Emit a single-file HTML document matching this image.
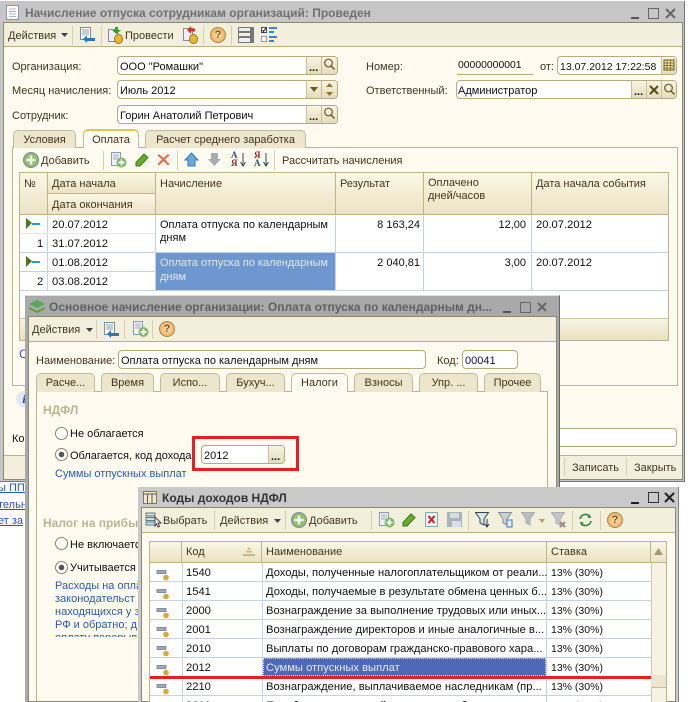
<!DOCTYPE html>
<html><head><meta charset="utf-8">
<style>
html,body{margin:0;padding:0;background:#fff}
#p{position:relative;width:688px;height:702px;overflow:hidden;background:#fff;font:11px "Liberation Sans",sans-serif;color:#3a3018}
#p div,#p span,#p svg{position:absolute;box-sizing:border-box}
.t{white-space:nowrap;line-height:14px;color:#40361c;margin-top:1px}
.k{color:#111;white-space:nowrap;line-height:14px;margin-top:1px}
.r{font-size:11.2px}
.n{font-size:10.5px}
.b{color:#2456c8;white-space:nowrap;line-height:13px;margin-top:1px}
.f{background:#fff;border:1px solid #b5aa80;border-radius:4px}
.btn{background:linear-gradient(#f8f4e2,#e4dcbc);border-left:1px solid #c8bf98}
.tab{background:#ece6cc;border:1px solid #c4bb96;border-bottom:none;border-radius:5px 5px 0 0;text-align:center;line-height:19px;color:#40361c;white-space:nowrap}
.act{background:#fffbf0;border-top:2px solid #e8c060}
.th{background:linear-gradient(#fbf7e4,#ebe3c4);border-right:1px solid #bdb48c;border-bottom:1px solid #bdb48c;padding:4px 0 0 4px;color:#40361c;line-height:14px;white-space:pre-line}
.w3 .th{padding-top:3px}
.sep{width:1px;background:#d6cfae}
.ln{background:#c4d2e4}
.tb{background:#f3efdd;border-bottom:1px solid #b8ae88}
</style></head><body><div id="p">

<!-- WINDOW 1 -->
<div style="left:0;top:1px;width:685px;height:481px;background:#c6c6c6;border-right:1px solid #777;border-bottom:1px solid #777"></div>
<div style="left:3px;top:22px;width:680px;height:458px;background:#fffbf0;border:1px solid #8a8a70"></div>
<svg style="left:6px;top:5px" width="13" height="15"><path d="M.5.5h12v14H.5z" fill="#fff" stroke="#7f9ab4"/><path d="M3 4h7M3 6.500h7M3 9h7M3 11.500h7" stroke="#a8b4bc"/></svg>
<span style="left:25px;top:6px;font-weight:bold;font-size:12px;line-height:14px;color:#707070;white-space:nowrap">Начисление отпуска сотрудникам организаций: Проведен</span>
<svg style="left:630px;top:6px" width="50" height="14"><path d="M1 12h8" stroke="#555" stroke-width="2"/><rect x="18.500" y="2.500" width="10" height="10" fill="none" stroke="#666"/><path d="M36 3l9 9M45 3l-9 9" stroke="#666" stroke-width="2"/></svg>
<div class="tb" style="left:4px;top:23px;width:678px;height:24px"></div>
<span class="t" style="left:8px;top:28px">Действия</span>
<svg style="left:61px;top:33px" width="7" height="4"><path d="M0 0h7L3.500 4z" fill="#444"/></svg>
<div class="sep" style="left:72px;top:26px;height:19px"></div>
<svg style="left:79px;top:27px" width="17" height="16"><path d="M1.500.5h10v12h-10z" fill="#fff" stroke="#7a8ca4"/><path d="M3 3h7M3 5h7M3 7h7" stroke="#89a"/><path d="M16 11H8V8l-4 4 4 4v-2h8z" fill="#2a78b8"/></svg>
<div class="sep" style="left:101px;top:26px;height:19px"></div>
<svg style="left:107px;top:27px" width="16" height="17"><path d="M1.500 2.500h9v12h-9z" fill="#eef" stroke="#889"/><path d="M8 0h3v3h3l-4.500 4L5 3h3z" fill="#3a9a3a"/><ellipse cx="11.500" cy="12" rx="4" ry="4.500" fill="#e8b830" stroke="#a07818"/></svg>
<span class="t" style="left:125px;top:28px">Провести</span>
<svg style="left:182px;top:26px" width="16" height="18"><path d="M1.500 2.500h9v12h-9z" fill="#eef" stroke="#889"/><path d="M5 4l4-4v2.500h4v3H9V8z" fill="#d83020"/><ellipse cx="11.500" cy="13" rx="4" ry="4.500" fill="#e8b830" stroke="#a07818"/></svg>
<div class="sep" style="left:203px;top:26px;height:19px"></div>
<div style="left:210px;top:27px;width:16px;height:16px;border-radius:50%;background:radial-gradient(#ffe4b4,#e8a048);border:1px solid #a8884c;text-align:center;font:bold 11px/14px 'Liberation Sans',sans-serif;color:#7a5a20">?</div>
<div class="sep" style="left:231px;top:26px;height:19px"></div>
<svg style="left:238px;top:27px" width="16" height="16"><path d="M0 0h16v16H0z" fill="#777"/><path d="M1 1h11v3H1zM1 6h11v3H1zM1 11h11v4H1z" fill="#eee"/></svg>
<svg style="left:261px;top:27px" width="18" height="16"><rect x=".5" y=".5" width="5" height="5" fill="#fff" stroke="#444"/><path d="M1.500 3l1 1.500L5 1" stroke="#111" fill="none"/><rect x=".5" y="9.500" width="5" height="5" fill="#fff" stroke="#999"/><path d="M8 1h8M8 5h5M8 10h8M8 14h5" stroke="#2a6ed0" stroke-width="1.800"/></svg>

<span class="t" style="left:12px;top:59px">Организация:</span>
<span class="t" style="left:12px;top:83px">Месяц начисления:</span>
<span class="t" style="left:12px;top:108px">Сотрудник:</span>
<div class="f" style="left:117px;top:56px;width:221px;height:19px"></div>
<span class="k" style="left:120px;top:59px">ООО "Ромашки"</span>
<div class="f" style="left:117px;top:80px;width:221px;height:19px"></div>
<span class="k" style="left:120px;top:83px">Июль 2012</span>
<div class="f" style="left:117px;top:105px;width:221px;height:19px"></div>
<span class="k" style="left:120px;top:108px">Горин Анатолий Петрович</span>
<!-- field buttons -->
<div class="btn" style="left:306px;top:57px;width:15px;height:17px"></div><div class="btn" style="left:321px;top:57px;width:16px;height:17px;border-radius:0 3px 3px 0"></div>
<span class="k" style="left:309px;top:60px;font-weight:bold">...</span>
<svg style="left:323px;top:58px" width="13" height="13"><circle cx="5.500" cy="5" r="3.800" fill="none" stroke="#6a5a28" stroke-width="1.200"/><path d="M8 8l3.500 3.500" stroke="#6a5a28" stroke-width="1.500"/></svg>
<div class="btn" style="left:306px;top:81px;width:15px;height:17px"></div><div class="btn" style="left:321px;top:81px;width:16px;height:17px;border-radius:0 3px 3px 0"></div>
<svg style="left:310px;top:87px" width="8" height="5"><path d="M0 0h8L4 5z" fill="#6a5a18"/></svg>
<svg style="left:326px;top:83px" width="7" height="13"><path d="M0 4l3.500-4L7 4zM0 9h7l-3.500 4z" fill="#8a7a30"/></svg>
<div class="btn" style="left:306px;top:106px;width:15px;height:17px"></div><div class="btn" style="left:321px;top:106px;width:16px;height:17px;border-radius:0 3px 3px 0"></div>
<span class="k" style="left:309px;top:109px;font-weight:bold">...</span>
<svg style="left:323px;top:107px" width="13" height="13"><circle cx="5.500" cy="5" r="3.800" fill="none" stroke="#6a5a28" stroke-width="1.200"/><path d="M8 8l3.500 3.500" stroke="#6a5a28" stroke-width="1.500"/></svg>

<span class="t" style="left:366px;top:59px">Номер:</span>
<span class="t" style="left:366px;top:83px">Ответственный:</span>
<span class="k" style="left:458px;top:58px;font-size:10.4px">00000000001</span>
<div style="left:457px;top:74px;width:76px;height:1px;background:#b5aa80"></div>
<span class="t" style="left:540px;top:59px">от:</span>
<div class="f" style="left:557px;top:56px;width:120px;height:19px"></div>
<span class="k" style="left:560px;top:59px;font-size:10.5px">13.07.2012 17:22:58</span>
<div class="btn" style="left:661px;top:57px;width:15px;height:17px;border-radius:0 3px 3px 0"></div>
<svg style="left:663px;top:59px" width="12" height="12"><path d="M1 1h10v10H1z" fill="#f4e8b0" stroke="#6a5a18"/><path d="M1 4h10M1 6.500h10M1 9h10M4 1v10M7.500 1v10" stroke="#6a5a18" stroke-width=".7"/></svg>
<div class="f" style="left:456px;top:80px;width:221px;height:19px"></div>
<span class="k" style="left:458px;top:83px">Администратор</span>
<div class="btn" style="left:631px;top:81px;width:15px;height:17px"></div><div class="btn" style="left:646px;top:81px;width:15px;height:17px"></div><div class="btn" style="left:661px;top:81px;width:15px;height:17px;border-radius:0 3px 3px 0"></div>
<span class="k" style="left:634px;top:84px;font-weight:bold">...</span>
<svg style="left:649px;top:85px" width="10" height="10"><path d="M1 1l8 8M9 1l-8 8" stroke="#5a4a18" stroke-width="2"/></svg>
<svg style="left:663px;top:83px" width="13" height="13"><circle cx="5.500" cy="5" r="3.800" fill="none" stroke="#6a5a28" stroke-width="1.200"/><path d="M8 8l3.500 3.500" stroke="#6a5a28" stroke-width="1.500"/></svg>

<!-- tabs -->
<div style="left:12px;top:147px;width:666px;height:239px;border:1px solid #bdb48c"></div>
<div class="tab" style="left:13px;top:130px;width:63px;height:18px">Условия</div>
<div class="tab" style="left:145px;top:130px;width:161px;height:18px">Расчет среднего заработка</div>
<div class="tab act" style="left:83px;top:129px;width:56px;height:19px;z-index:2;line-height:18px">Оплата</div>

<!-- inner toolbar -->
<svg style="left:23px;top:152px" width="16" height="16"><circle cx="8" cy="8" r="7.500" fill="#8ec06c" stroke="#789"/><path d="M8 3.500v9M3.500 8h9" stroke="#fff" stroke-width="2.500"/></svg>
<span class="t" style="left:41px;top:153px"><u>Д</u>обавить</span>
<div class="sep" style="left:103px;top:151px;height:19px"></div>
<svg style="left:110px;top:152px" width="17" height="16"><path d="M1.500.5h9v13h-9z" fill="#f0f4fa" stroke="#8a9ab0"/><path d="M3 3h6M3 5h6M3 7h6" stroke="#aab"/><circle cx="11.500" cy="10.500" r="5" fill="#80b868"/><path d="M11.500 7.500v6M8.500 10.500h6" stroke="#fff" stroke-width="1.800"/></svg>
<svg style="left:135px;top:153px" width="14" height="14"><path d="M1 13V9.500L9 1l4 3.500L5 13z" fill="#68ac30" stroke="#3a7a18"/></svg>
<svg style="left:157px;top:153px" width="13" height="13"><path d="M2 1l4.500 4L11 1l1.500 1.500L8 6.500l4.500 4.500-1.500 1.500L6.500 8 2 12.500.5 11 5 6.500.5 2.500z" fill="#e86a50"/></svg>
<div class="sep" style="left:177px;top:151px;height:19px"></div>
<svg style="left:184px;top:152px" width="15" height="15"><path d="M7.500 1L14 8h-3v6H4V8H1z" fill="#6aa8e0" stroke="#3a78b0"/></svg>
<svg style="left:207px;top:152px" width="15" height="15"><path d="M4 1h7v6h3l-6.500 7L1 7h3z" fill="#a8acae"/></svg>
<span style="left:231px;top:151px;font:bold 9px/8px 'Liberation Serif',serif;color:#2a50a0">А</span><span style="left:231px;top:159px;font:bold 9px/8px 'Liberation Serif',serif;color:#b02020">Я</span>
<svg style="left:240px;top:153px" width="6" height="14"><path d="M3 0v12M.5 9L3 13l2.500-4" stroke="#345" fill="none"/></svg>
<span style="left:254px;top:151px;font:bold 9px/8px 'Liberation Serif',serif;color:#b02020">Я</span><span style="left:254px;top:159px;font:bold 9px/8px 'Liberation Serif',serif;color:#2a50a0">А</span>
<svg style="left:263px;top:153px" width="6" height="14"><path d="M3 0v12M.5 9L3 13l2.500-4" stroke="#345" fill="none"/></svg>
<div class="sep" style="left:274px;top:151px;height:19px"></div>
<span class="t" style="left:282px;top:153px">Рассчитать начисления</span>

<!-- table 1 -->
<div style="left:19px;top:172px;width:650px;height:169px;background:#fff;border:1px solid #bdb48c"></div>
<div class="th" style="left:20px;top:173px;width:28px;height:42px">№</div>
<div class="th" style="left:48px;top:173px;width:108px;height:21px">Дата начала</div>
<div class="th" style="left:48px;top:194px;width:108px;height:21px">Дата окончания</div>
<div class="th" style="left:156px;top:173px;width:180px;height:42px">Начисление</div>
<div class="th" style="left:336px;top:173px;width:88px;height:42px">Результат</div>
<div class="th" style="left:424px;top:173px;width:108px;height:42px;line-height:13px">Оплачено
дней/часов</div>
<div class="th" style="left:532px;top:173px;width:136px;height:42px;border-right:none">Дата начала события</div>
<div class="ln" style="left:20px;top:252px;width:648px;height:1px"></div>
<div class="ln" style="left:20px;top:290px;width:648px;height:1px"></div>
<div class="ln" style="left:47px;top:215px;width:1px;height:75px"></div>
<div class="ln" style="left:155px;top:215px;width:1px;height:75px"></div>
<div class="ln" style="left:335px;top:215px;width:1px;height:75px"></div>
<div class="ln" style="left:423px;top:215px;width:1px;height:75px"></div>
<div class="ln" style="left:531px;top:215px;width:1px;height:75px"></div>
<div class="ln" style="left:20px;top:233px;width:135px;height:1px;background:#e4e8ee"></div>
<div class="ln" style="left:20px;top:271px;width:135px;height:1px"></div>
<svg style="left:26px;top:218px" width="15" height="12"><path d="M0 0l6 5-6 6z" fill="#4a7a18"/><path d="M6 6h8" stroke="#2a9ac8" stroke-width="2"/></svg>
<svg style="left:26px;top:256px" width="15" height="12"><path d="M0 0l6 5-6 6z" fill="#4a7a18"/><path d="M6 6h8" stroke="#2a9ac8" stroke-width="2"/></svg>
<span class="k r" style="left:52px;top:217px">20.07.2012</span>
<span class="k r" style="left:37px;top:236px">1</span><span class="k r" style="left:52px;top:236px">31.07.2012</span>
<span class="k r" style="left:52px;top:255px">01.08.2012</span>
<span class="k r" style="left:37px;top:274px">2</span><span class="k r" style="left:52px;top:274px">03.08.2012</span>
<span class="k" style="left:160px;top:217px">Оплата отпуска по календарным</span><span class="k" style="left:160px;top:230px">дням</span>
<div style="left:156px;top:253px;width:179px;height:37px;background:#6f97cf"></div>
<span class="k" style="left:160px;top:255px;color:#dfe8f4">Оплата отпуска по календарным</span><span class="k" style="left:160px;top:269px;color:#dfe8f4">дням</span>
<span class="k" style="right:268px;top:217px">8 163,24</span>
<span class="k" style="right:268px;top:255px">2 040,81</span>
<span class="k" style="right:162px;top:217px">12,00</span>
<span class="k" style="right:162px;top:255px">3,00</span>
<span class="k r" style="left:536px;top:217px">20.07.2012</span>
<span class="k r" style="left:536px;top:255px">20.07.2012</span>
<div style="left:20px;top:318px;width:648px;height:22px;background:linear-gradient(#f8f5e4,#e8e0c0);border-top:1px solid #d0c8a4"></div>

<span class="b" style="left:19px;top:347px;font-size:12px">С</span>
<div style="left:16px;top:391px;width:16px;height:16px;border-radius:50%;background:#e4e8f4;color:#1a3ac0;font:bold italic 12px/16px 'Liberation Serif',serif;text-align:center">i</div>
<span class="k" style="left:12px;top:431px">Ко</span>
<div class="f" style="left:500px;top:428px;width:177px;height:19px"></div>
<div style="left:4px;top:455px;width:678px;height:24px;background:#f3efdd;border-top:1px solid #bdb48c"></div>
<div class="sep" style="left:564px;top:458px;height:18px"></div>
<span class="t" style="left:572px;top:460px">Записать</span>
<div class="sep" style="left:626px;top:458px;height:18px"></div>
<span class="t" style="left:634px;top:460px">Закрыть</span>

<!-- behind links -->
<span class="b" style="left:-2px;top:481px;text-decoration:underline">ы ПП</span>
<span class="b" style="left:-2px;top:498px;text-decoration:underline">тельн</span>
<span class="b" style="left:-2px;top:514px;text-decoration:underline">ет за</span>

<!-- WINDOW 2 -->
<div style="left:25px;top:295px;width:535px;height:407px;background:#a9a9a9;border-right:1px solid #666;border-top:1px solid #e0e0e0"></div>
<div style="left:28px;top:316px;width:529px;height:386px;background:#fffbf0;border:1px solid #8a8a70"></div>
<svg style="left:29px;top:300px" width="16" height="13"><path d="M8 0l8 4-8 4-8-4z" fill="#58a858"/><path d="M0 7l8 4 8-4v2l-8 4-8-4z" fill="#58a030"/></svg>
<span style="left:49px;top:300px;font-weight:bold;font-size:12px;line-height:14px;color:#606060;white-space:nowrap">Основное начисление организации: Оплата отпуска по календарным дн...</span>
<svg style="left:502px;top:300px" width="50" height="14"><path d="M1 12h8" stroke="#555" stroke-width="2"/><rect x="18.500" y="2.500" width="10" height="10" fill="none" stroke="#666"/><path d="M36 3l8 8M44 3l-8 8" stroke="#666" stroke-width="2"/></svg>
<div class="tb" style="left:29px;top:317px;width:527px;height:25px"></div>
<span class="t" style="left:32px;top:322px">Действия</span>
<svg style="left:86px;top:328px" width="7" height="4"><path d="M0 0h7L3.500 4z" fill="#444"/></svg>
<div class="sep" style="left:96px;top:320px;height:19px"></div>
<svg style="left:103px;top:322px" width="17" height="16"><path d="M1.500.5h10v12h-10z" fill="#fff" stroke="#7a8ca4"/><path d="M3 3h7M3 5h7M3 7h7" stroke="#89a"/><path d="M16 11H8V8l-4 4 4 4v-2h8z" fill="#2a78b8"/></svg>
<div class="sep" style="left:124px;top:320px;height:19px"></div>
<svg style="left:132px;top:321px" width="17" height="17"><path d="M1.500.5h9v13h-9z" fill="#f0f4fa" stroke="#8a9ab0"/><path d="M3 3h6M3 5h6M3 7h6" stroke="#aab"/><circle cx="11.500" cy="11" r="5" fill="#80b868"/><path d="M11.500 8v6M8.500 11h6" stroke="#fff" stroke-width="1.800"/></svg>
<div class="sep" style="left:152px;top:320px;height:19px"></div>
<div style="left:159px;top:321px;width:16px;height:16px;border-radius:50%;background:radial-gradient(#ffe4b4,#e8a048);border:1px solid #a8884c;text-align:center;font:bold 11px/14px 'Liberation Sans',sans-serif;color:#7a5a20">?</div>

<span class="t" style="left:36px;top:353px">Наименование:</span>
<div class="f" style="left:118px;top:350px;width:308px;height:19px"></div>
<span class="k" style="left:121px;top:353px">Оплата отпуска по календарным дням</span>
<span class="t" style="left:437px;top:353px">Код:</span>
<div class="f" style="left:462px;top:350px;width:56px;height:19px"></div>
<span class="k" style="left:465px;top:353px;color:#101060">00041</span>

<div style="left:36px;top:391px;width:512px;height:320px;border:1px solid #bdb48c"></div>
<div class="tab" style="left:36px;top:373px;width:59px;height:19px">Расче...</div>
<div class="tab" style="left:101px;top:373px;width:53px;height:19px">Время</div>
<div class="tab" style="left:160px;top:373px;width:60px;height:19px">Испо...</div>
<div class="tab" style="left:226px;top:373px;width:59px;height:19px">Бухуч...</div>
<div class="tab act" style="left:291px;top:373px;width:57px;height:19px;z-index:2;border-top:1px solid #c4bb96">Налоги</div>
<div class="tab" style="left:354px;top:373px;width:59px;height:19px">Взносы</div>
<div class="tab" style="left:419px;top:373px;width:59px;height:19px">Упр. ...</div>
<div class="tab" style="left:484px;top:373px;width:57px;height:19px">Прочее</div>

<span style="left:43px;top:403px;font-weight:bold;font-size:12px;line-height:14px;color:#bdb494">НДФЛ</span>
<div style="left:55px;top:427px;width:13px;height:13px;border:1px solid #8a8468;border-radius:50%;background:#fff"></div>
<span class="k" style="left:70px;top:426px">Не облагается</span>
<div style="left:55px;top:448px;width:13px;height:13px;border:1px solid #8a8468;border-radius:50%;background:radial-gradient(#555 0 2.500px,#fff 3px)"></div>
<span class="k" style="left:70px;top:448px">Облагается, код дохода</span>
<span class="b" style="left:55px;top:467px;color:#2a5ab0">Суммы отпускных выплат</span>
<div style="left:192px;top:436px;width:107px;height:35px;border:3.500px solid #ea1c24"></div>
<div class="f" style="left:201px;top:445px;width:84px;height:19px"></div>
<span class="k" style="left:204px;top:448px">2012</span>
<div class="btn" style="left:268px;top:446px;width:16px;height:17px;border-radius:0 3px 3px 0"></div>
<span class="k" style="left:271px;top:449px;font-weight:bold">...</span>

<span style="left:43px;top:516px;font-weight:bold;font-size:12px;line-height:14px;color:#bdb494;white-space:nowrap">Налог на прибы</span>
<div style="left:55px;top:537px;width:13px;height:13px;border:1px solid #8a8468;border-radius:50%;background:#fff"></div>
<span class="k" style="left:70px;top:537px">Не включается</span>
<div style="left:55px;top:561px;width:13px;height:13px;border:1px solid #8a8468;border-radius:50%;background:radial-gradient(#555 0 2.500px,#fff 3px)"></div>
<span class="k" style="left:70px;top:560px">Учитывается</span>
<span class="b" style="left:55px;top:579px;color:#2a5ab0">Расходы на опла</span>
<span class="b" style="left:55px;top:592px;color:#2a5ab0">законодательст</span>
<span class="b" style="left:55px;top:605px;color:#2a5ab0">находящихся у з</span>
<span class="b" style="left:55px;top:618px;color:#2a5ab0">РФ и обратно; д</span>
<div style="left:55px;top:631px;width:85px;height:6px;overflow:hidden"><span class="b" style="left:0;top:0;color:#2a5ab0">оплату перерыв</span></div>

<!-- WINDOW 3 -->
<div class="w3" style="left:0;top:0;width:688px;height:702px">
<div style="left:138px;top:487px;width:541px;height:215px;background:#c9c9c9;border-right:1px solid #888"></div>
<div style="left:141px;top:507px;width:535px;height:195px;background:#fffbf0;border:1px solid #8a8a70"></div>
<svg style="left:143px;top:491px" width="14" height="13"><path d="M.5.500h13v12H.5z" fill="#f4e8c0" stroke="#777"/><path d="M.5 3h13M4.500 3v9M9 3v9" stroke="#556"/></svg>
<span style="left:162px;top:491px;font-weight:bold;font-size:12px;line-height:14px;color:#333;white-space:nowrap">Коды доходов НДФЛ</span>
<svg style="left:630px;top:490px" width="46" height="15"><path d="M1 13h8" stroke="#222" stroke-width="2"/><rect x="18.500" y="2.500" width="10" height="10" fill="none" stroke="#333"/><path d="M35 3l9 9M44 3l-9 9" stroke="#222" stroke-width="2"/></svg>
<div class="tb" style="left:142px;top:508px;width:533px;height:25px"></div>
<svg style="left:145px;top:512px" width="18" height="16"><path d="M1 1h9v3H1zM1 5.500h9v3H1zM1 10h9v3H1z" fill="#cfe0e8" stroke="#5a7a88"/><path d="M10 5l6 6h-3l1.500 3.500-1.500.5L11.500 12 10 14z" fill="#fff" stroke="#445"/></svg>
<span class="t" style="left:163px;top:513px">Выбрать</span>
<div class="sep" style="left:214px;top:511px;height:19px"></div>
<span class="t" style="left:220px;top:513px">Действия</span>
<svg style="left:274px;top:519px" width="7" height="4"><path d="M0 0h7L3.500 4z" fill="#444"/></svg>
<div class="sep" style="left:285px;top:511px;height:19px"></div>
<svg style="left:291px;top:512px" width="16" height="16"><circle cx="8" cy="8" r="7.500" fill="#8ec06c" stroke="#789"/><path d="M8 3.500v9M3.500 8h9" stroke="#fff" stroke-width="2.500"/></svg>
<span class="t" style="left:309px;top:513px"><u>Д</u>обавить</span>
<div class="sep" style="left:371px;top:511px;height:19px"></div>
<svg style="left:378px;top:512px" width="17" height="16"><path d="M1.500.5h9v13h-9z" fill="#f0f4fa" stroke="#8a9ab0"/><path d="M3 3h6M3 5h6M3 7h6" stroke="#aab"/><circle cx="11.500" cy="10.500" r="5" fill="#80b868"/><path d="M11.500 7.500v6M8.500 10.500h6" stroke="#fff" stroke-width="1.800"/></svg>
<svg style="left:402px;top:513px" width="14" height="14"><path d="M1 13V9.500L9 1l4 3.500L5 13z" fill="#68ac30" stroke="#3a7a18"/></svg>
<svg style="left:425px;top:512px" width="13" height="15"><path d="M.5.500h12v14H.5z" fill="#e8f0f8" stroke="#8aa"/><path d="M3.500 4l6 7M9.500 4l-6 7" stroke="#d02020" stroke-width="2"/></svg>
<svg style="left:447px;top:512px" width="15" height="15"><path d="M0 0h15v15H0z" fill="#a8b4bc"/><path d="M3 1h9v5H3z" fill="#d8dcdc"/><path d="M5 9h9v6H5z" fill="#dde"/></svg>
<div class="sep" style="left:468px;top:511px;height:19px"></div>
<svg style="left:475px;top:512px" width="15" height="16"><path d="M.5.500h13L9 7v6l-4-2V7z" fill="#dde4e8" stroke="#345"/><path d="M12 7v7M10 12l2 3 2-3" stroke="#234" fill="none"/></svg>
<svg style="left:498px;top:512px" width="15" height="16"><path d="M.5.500h13L9 7v6l-4-2V7z" fill="#c8d0d0" stroke="#889"/><path d="M9 8h5v7H9z" fill="#e8f0fa" stroke="#3a78c0"/></svg>
<svg style="left:521px;top:512px" width="15" height="16"><path d="M.5.500h13L9 7v6l-4-2V7z" fill="#b8c0b8" stroke="#aab"/></svg>
<svg style="left:539px;top:519px" width="6" height="4"><path d="M0 0h6L3 4z" fill="#b8a050"/></svg>
<svg style="left:551px;top:512px" width="16" height="16"><path d="M.5.500h13L9 7v6l-4-2V7z" fill="#c0c8c8" stroke="#aab"/><path d="M9 10l5 5M14 10l-5 5" stroke="#a08888" stroke-width="2"/></svg>
<div class="sep" style="left:572px;top:511px;height:19px"></div>
<svg style="left:578px;top:513px" width="15" height="14"><path d="M2 6a5.500 5.500 0 0 1 10-2M13 8a5.500 5.500 0 0 1-10 2" stroke="#2a8a3a" stroke-width="1.600" fill="none"/><path d="M11 1l2.500 3.500L9.500 5zM4 13l-2.500-3.500L5.500 9z" fill="#2a8a3a"/></svg>
<div class="sep" style="left:600px;top:511px;height:19px"></div>
<div style="left:607px;top:512px;width:16px;height:16px;border-radius:50%;background:radial-gradient(#ffe4b4,#e8a048);border:1px solid #a8884c;text-align:center;font:bold 11px/14px 'Liberation Sans',sans-serif;color:#7a5a20">?</div>

<div style="left:149px;top:541px;width:518px;height:161px;background:#fff;border:1px solid #bdb48c;border-bottom:none"></div>
<div class="th" style="left:150px;top:542px;width:32px;height:21px"></div>
<div class="th" style="left:182px;top:542px;width:80px;height:21px">Код</div>
<svg style="left:243px;top:547px" width="12" height="10"><path d="M6 0l2 3H4zM3 4h6v1.500H3zM0 7h12v2H0z" fill="#c8bb88"/></svg>
<div class="th" style="left:262px;top:542px;width:285px;height:21px">Наименование</div>
<div class="th" style="left:547px;top:542px;width:104px;height:21px">Ставка</div>
<div class="th" style="left:651px;top:542px;width:15px;height:21px;border-right:none"></div>
<svg style="left:654px;top:548px" width="9" height="7"><path d="M0 7l4.500-7L9 7z" fill="#a09a7a"/></svg>
<div style="left:651px;top:563px;width:15px;height:139px;background:#f7f3e2;border-left:1px solid #d0c8a8"></div>
<div style="left:651px;top:675px;width:15px;height:13px;background:#ece6cc;border-bottom:1px solid #c8bf98"></div>

<div class="ln" style="left:150px;top:581px;width:501px;height:1px"></div>
<div class="ln" style="left:150px;top:600px;width:501px;height:1px"></div>
<div class="ln" style="left:150px;top:619px;width:501px;height:1px"></div>
<div class="ln" style="left:150px;top:638px;width:501px;height:1px"></div>
<div class="ln" style="left:150px;top:657px;width:501px;height:1px"></div>
<div class="ln" style="left:150px;top:695px;width:501px;height:1px"></div>
<div class="ln" style="left:182px;top:563px;width:1px;height:139px"></div>
<div class="ln" style="left:262px;top:563px;width:1px;height:139px"></div>
<div class="ln" style="left:546px;top:563px;width:1px;height:139px"></div>

<svg style="left:156px;top:568px" width="14" height="13"><path d="M1 2.500h9v3H1z" fill="#9aa8c0" stroke="#6a7a90" stroke-width=".7"/><circle cx="10" cy="9.500" r="2.800" fill="#d8a838"/></svg>
<svg style="left:156px;top:587px" width="14" height="13"><path d="M1 2.500h9v3H1z" fill="#9aa8c0" stroke="#6a7a90" stroke-width=".7"/><circle cx="10" cy="9.500" r="2.800" fill="#d8a838"/></svg>
<svg style="left:156px;top:606px" width="14" height="13"><path d="M1 2.500h9v3H1z" fill="#9aa8c0" stroke="#6a7a90" stroke-width=".7"/><circle cx="10" cy="9.500" r="2.800" fill="#d8a838"/></svg>
<svg style="left:156px;top:625px" width="14" height="13"><path d="M1 2.500h9v3H1z" fill="#9aa8c0" stroke="#6a7a90" stroke-width=".7"/><circle cx="10" cy="9.500" r="2.800" fill="#d8a838"/></svg>
<svg style="left:156px;top:644px" width="14" height="13"><path d="M1 2.500h9v3H1z" fill="#9aa8c0" stroke="#6a7a90" stroke-width=".7"/><circle cx="10" cy="9.500" r="2.800" fill="#d8a838"/></svg>
<svg style="left:156px;top:663px" width="14" height="13"><path d="M1 2.500h9v3H1z" fill="#9aa8c0" stroke="#6a7a90" stroke-width=".7"/><circle cx="10" cy="9.500" r="2.800" fill="#d8a838"/></svg>
<svg style="left:156px;top:682px" width="14" height="13"><path d="M1 2.500h9v3H1z" fill="#9aa8c0" stroke="#6a7a90" stroke-width=".7"/><circle cx="10" cy="9.500" r="2.800" fill="#d8a838"/></svg>

<span class="k r" style="left:186px;top:565px">1540</span><span class="k r" style="left:266px;top:565px">Доходы, полученные налогоплательщиком от реали...</span><span class="k n" style="left:551px;top:565px">13% (30%)</span>
<span class="k r" style="left:186px;top:584px">1541</span><span class="k r" style="left:266px;top:584px">Доходы, получаемые в результате обмена ценных б...</span><span class="k n" style="left:551px;top:584px">13% (30%)</span>
<span class="k r" style="left:186px;top:603px">2000</span><span class="k r" style="left:266px;top:603px">Вознаграждение за выполнение трудовых или иных...</span><span class="k n" style="left:551px;top:603px">13% (30%)</span>
<span class="k r" style="left:186px;top:622px">2001</span><span class="k r" style="left:266px;top:622px">Вознаграждение директоров и иные аналогичные в...</span><span class="k n" style="left:551px;top:622px">13% (30%)</span>
<span class="k r" style="left:186px;top:641px">2010</span><span class="k r" style="left:266px;top:641px">Выплаты по договорам гражданско-правового хара...</span><span class="k n" style="left:551px;top:641px">13% (30%)</span>
<div style="left:263px;top:658px;width:283px;height:18px;background:#4f68b8;border:1px dotted #dde"></div>
<span class="k r" style="left:186px;top:660px">2012</span><span class="k r" style="left:266px;top:660px;color:#e4e8f6">Суммы отпускных выплат</span><span class="k n" style="left:551px;top:660px">13% (30%)</span>
<span class="k r" style="left:186px;top:679px">2210</span><span class="k r" style="left:266px;top:679px">Вознаграждение, выплачиваемое наследникам (пр...</span><span class="k n" style="left:551px;top:679px">13% (30%)</span>
<span class="k r" style="left:186px;top:698px">2300</span><span class="k r" style="left:266px;top:698px">Пособия по временной нетрудоспособности</span><span class="k n" style="left:551px;top:698px">13% (30%)</span>
<div style="left:150px;top:676px;width:501px;height:3px;background:#ea1c24"></div>
</div>

</div></body></html>
